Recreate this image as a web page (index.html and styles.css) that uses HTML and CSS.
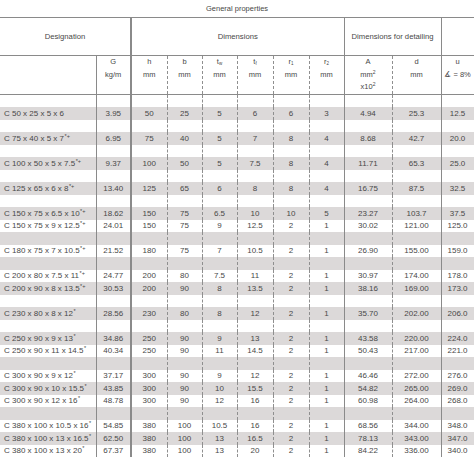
FILE: index.html
```html
<!DOCTYPE html>
<html>
<head>
<meta charset="utf-8">
<link rel="stylesheet" href="styles.css">
</head>
<body>
<table class="props">
  <colgroup>
    <col class="c-des"><col class="c-g"><col class="c-h"><col class="c-b"><col class="c-tw"><col class="c-tf"><col class="c-r1"><col class="c-r2"><col class="c-a"><col class="c-d"><col class="c-u">
  </colgroup>
  <thead>
    <tr class="h-top"><th colspan="11">General properties</th></tr>
    <tr class="h-group">
      <th colspan="2">Designation</th>
      <th colspan="6" class="bl2">Dimensions</th>
      <th colspan="2" class="bl">Dimensions for detailing</th>
      <th class="bl br"></th>
    </tr>
    <tr class="h-units">
      <th></th>
      <th>G<br>kg/m</th>
      <th>h<br>mm</th>
      <th>b<br>mm</th>
      <th>t<sub>w</sub><br>mm</th>
      <th>t<sub>f</sub><br>mm</th>
      <th>r<sub>1</sub><br>mm</th>
      <th>r<sub>2</sub><br>mm</th>
      <th>A<br>mm<sup>2</sup><br>x10<sup>2</sup></th>
      <th>d<br>mm</th>
      <th>u<br>∡ = 8%</th>
    </tr>
  </thead>
  <tbody>
    <tr><td></td><td></td><td></td><td></td><td></td><td></td><td></td><td></td><td></td><td></td><td></td></tr>
    <tr><td>C 50 x 25 x 5 x 6</td><td>3.95</td><td>50</td><td>25</td><td>5</td><td>6</td><td>6</td><td>3</td><td>4.94</td><td>25.3</td><td>12.5</td></tr>
    <tr><td></td><td></td><td></td><td></td><td></td><td></td><td></td><td></td><td></td><td></td><td></td></tr>
    <tr><td>C 75 x 40 x 5 x 7<sup>*+</sup></td><td>6.95</td><td>75</td><td>40</td><td>5</td><td>7</td><td>8</td><td>4</td><td>8.68</td><td>42.7</td><td>20.0</td></tr>
    <tr><td></td><td></td><td></td><td></td><td></td><td></td><td></td><td></td><td></td><td></td><td></td></tr>
    <tr><td>C 100 x 50 x 5 x 7.5<sup>*+</sup></td><td>9.37</td><td>100</td><td>50</td><td>5</td><td>7.5</td><td>8</td><td>4</td><td>11.71</td><td>65.3</td><td>25.0</td></tr>
    <tr><td></td><td></td><td></td><td></td><td></td><td></td><td></td><td></td><td></td><td></td><td></td></tr>
    <tr><td>C 125 x 65 x 6 x 8<sup>*+</sup></td><td>13.40</td><td>125</td><td>65</td><td>6</td><td>8</td><td>8</td><td>4</td><td>16.75</td><td>87.5</td><td>32.5</td></tr>
    <tr><td></td><td></td><td></td><td></td><td></td><td></td><td></td><td></td><td></td><td></td><td></td></tr>
    <tr><td>C 150 x 75 x 6.5 x 10<sup>*+</sup></td><td>18.62</td><td>150</td><td>75</td><td>6.5</td><td>10</td><td>10</td><td>5</td><td>23.27</td><td>103.7</td><td>37.5</td></tr>
    <tr><td>C 150 x 75 x 9 x 12.5<sup>*+</sup></td><td>24.01</td><td>150</td><td>75</td><td>9</td><td>12.5</td><td>2</td><td>1</td><td>30.02</td><td>121.00</td><td>125.0</td></tr>
    <tr><td></td><td></td><td></td><td></td><td></td><td></td><td></td><td></td><td></td><td></td><td></td></tr>
    <tr><td>C 180 x 75 x 7 x 10.5<sup>*+</sup></td><td>21.52</td><td>180</td><td>75</td><td>7</td><td>10.5</td><td>2</td><td>1</td><td>26.90</td><td>155.00</td><td>159.0</td></tr>
    <tr><td></td><td></td><td></td><td></td><td></td><td></td><td></td><td></td><td></td><td></td><td></td></tr>
    <tr><td>C 200 x 80 x 7.5 x 11<sup>*+</sup></td><td>24.77</td><td>200</td><td>80</td><td>7.5</td><td>11</td><td>2</td><td>1</td><td>30.97</td><td>174.00</td><td>178.0</td></tr>
    <tr><td>C 200 x 90 x 8 x 13.5<sup>*+</sup></td><td>30.53</td><td>200</td><td>90</td><td>8</td><td>13.5</td><td>2</td><td>1</td><td>38.16</td><td>169.00</td><td>173.0</td></tr>
    <tr><td></td><td></td><td></td><td></td><td></td><td></td><td></td><td></td><td></td><td></td><td></td></tr>
    <tr><td>C 230 x 80 x 8 x 12<sup>*</sup></td><td>28.56</td><td>230</td><td>80</td><td>8</td><td>12</td><td>2</td><td>1</td><td>35.70</td><td>202.00</td><td>206.0</td></tr>
    <tr><td></td><td></td><td></td><td></td><td></td><td></td><td></td><td></td><td></td><td></td><td></td></tr>
    <tr><td>C 250 x 90 x 9 x 13<sup>*</sup></td><td>34.86</td><td>250</td><td>90</td><td>9</td><td>13</td><td>2</td><td>1</td><td>43.58</td><td>220.00</td><td>224.0</td></tr>
    <tr><td>C 250 x 90 x 11 x 14.5<sup>*</sup></td><td>40.34</td><td>250</td><td>90</td><td>11</td><td>14.5</td><td>2</td><td>1</td><td>50.43</td><td>217.00</td><td>221.0</td></tr>
    <tr><td></td><td></td><td></td><td></td><td></td><td></td><td></td><td></td><td></td><td></td><td></td></tr>
    <tr><td>C 300 x 90 x 9 x 12<sup>*</sup></td><td>37.17</td><td>300</td><td>90</td><td>9</td><td>12</td><td>2</td><td>1</td><td>46.46</td><td>272.00</td><td>276.0</td></tr>
    <tr><td>C 300 x 90 x 10 x 15.5<sup>*</sup></td><td>43.85</td><td>300</td><td>90</td><td>10</td><td>15.5</td><td>2</td><td>1</td><td>54.82</td><td>265.00</td><td>269.0</td></tr>
    <tr><td>C 300 x 90 x 12 x 16<sup>*</sup></td><td>48.78</td><td>300</td><td>90</td><td>12</td><td>16</td><td>2</td><td>1</td><td>60.98</td><td>264.00</td><td>268.0</td></tr>
    <tr><td></td><td></td><td></td><td></td><td></td><td></td><td></td><td></td><td></td><td></td><td></td></tr>
    <tr><td>C 380 x 100 x 10.5 x 16<sup>*</sup></td><td>54.85</td><td>380</td><td>100</td><td>10.5</td><td>16</td><td>2</td><td>1</td><td>68.56</td><td>344.00</td><td>348.0</td></tr>
    <tr><td>C 380 x 100 x 13 x 16.5<sup>*</sup></td><td>62.50</td><td>380</td><td>100</td><td>13</td><td>16.5</td><td>2</td><td>1</td><td>78.13</td><td>343.00</td><td>347.0</td></tr>
    <tr><td>C 380 x 100 x 13 x 20<sup>*</sup></td><td>67.37</td><td>380</td><td>100</td><td>13</td><td>20</td><td>2</td><td>1</td><td>84.22</td><td>336.00</td><td>340.0</td></tr>
  </tbody>
</table>
</body>
</html>
```
FILE: styles.css
```css
html, body {
  margin: 0;
  padding: 0;
  background: #ffffff;
}
body {
  font-family: "Liberation Sans", Arial, sans-serif;
  color: #484848;
}
.props {
  border-collapse: collapse;
  table-layout: fixed;
  width: 474px;
  font-size: 8px;
}
.c-des { width: 96px; }
.c-g { width: 35px; }
.c-h { width: 36px; }
.c-b { width: 35px; }
.c-tw { width: 35px; }
.c-tf { width: 36px; }
.c-r1 { width: 36px; }
.c-r2 { width: 35px; }
.c-a { width: 48px; }
.c-d { width: 49px; }
.c-u { width: 33px; }

.props th {
  font-weight: normal;
  padding: 0;
  text-align: center;
}
.h-top th {
  height: 17px;
  line-height: 12px;
  font-size: 7.5px;
  border-bottom: 1px solid #8a8a8a;
  vertical-align: middle;
}
.h-group th {
  height: 37px;
  line-height: 12px;
  font-size: 7.7px;
  border-bottom: 1px solid #8a8a8a;
  vertical-align: middle;
}
.h-units th {
  height: 37px;
  line-height: 12.5px;
  vertical-align: top;
  padding-top: 0;
  font-size: 7.5px;
  border-bottom: 1px solid #8a8a8a;
}
.bl { border-left: 1px solid #8a8a8a; }
.bl2 { border-left: 2px solid #8a8a8a; }
.br { border-right: 1px solid #8a8a8a; }

.props sub {
  font-size: 4.5px;
  vertical-align: -1px;
  line-height: 0;
}
.props sup {
  font-size: 5px;
  vertical-align: 3px;
  line-height: 0;
}
.props td sup {
  font-size: 5.5px;
  margin-left: 0.5px;
}

.props td {
  height: 12.5px;
  line-height: 11px;
  padding: 0;
  text-align: center;
  white-space: nowrap;
}
.props td:first-child {
  text-align: left;
  padding-left: 4px;
}
.props tbody tr:nth-child(even) td {
  background: #dcd9d9;
}

.h-units th:nth-child(2),
.props td:nth-child(2) { border-left: 1px solid #8a8a8a; }
.h-units th:nth-child(3),
.props td:nth-child(3) { border-left: 2px solid #8a8a8a; }
.h-units th:nth-child(4),
.h-units th:nth-child(5),
.h-units th:nth-child(6),
.h-units th:nth-child(7),
.h-units th:nth-child(8),
.h-units th:nth-child(10),
.props td:nth-child(4),
.props td:nth-child(5),
.props td:nth-child(6),
.props td:nth-child(7),
.props td:nth-child(8),
.props td:nth-child(10) { border-left: 1px dashed #8f8f8f; }
.h-units th:nth-child(9),
.h-units th:nth-child(11),
.props td:nth-child(9),
.props td:nth-child(11) { border-left: 1px solid #8a8a8a; }
.h-units th:nth-child(11),
.props td:nth-child(11) { border-right: 1px solid #8a8a8a; }
```
